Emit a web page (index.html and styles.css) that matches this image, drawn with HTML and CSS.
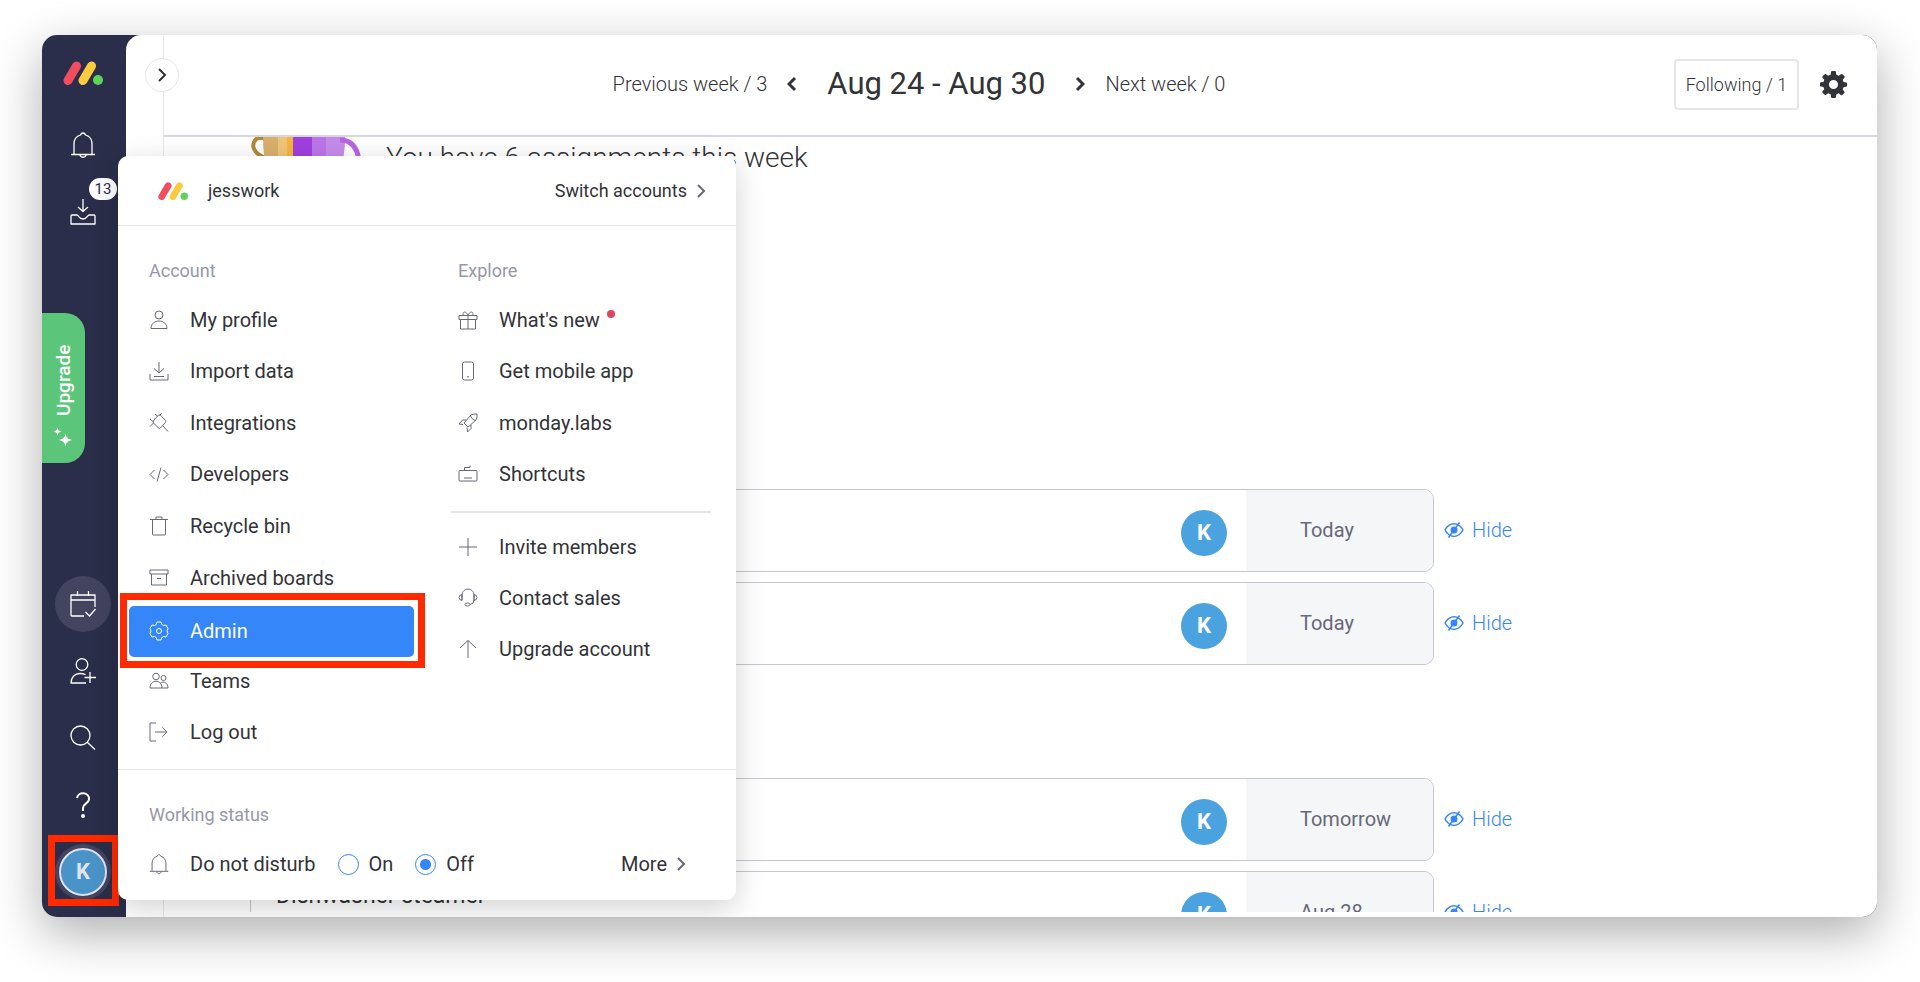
FILE: index.html
```
<!DOCTYPE html>
<html lang="en">
<head>
    <meta charset="UTF-8">
    <meta name="viewport" content="width=device-width, initial-scale=1.0">
    <title>My Week</title>
    <link rel="stylesheet" href="styles.css">
</head>
<body>
    <svg class="sprite" aria-hidden="true">
        <symbol id="logo" viewBox="0 0 40 24">
            <path d="M5 19.5 13.5 5" stroke="#f04e5e" stroke-width="9" stroke-linecap="round"/>
            <path d="M20 19.5 28.500 5" stroke="#fbcb3f" stroke-width="9" stroke-linecap="round"/>
            <circle cx="35" cy="19" r="5" fill="#5ed35c"/>
        </symbol>
        <symbol id="bell" viewBox="0 0 26 26">
            <path d="M1 22.500h24M4 22V12c0-5 3-8 6.500-9 .5-1.500 1.500-2 2.500-2s2 .5 2.500 2c3.500 1 6.500 4 6.500 9v10M10 23c.5 3 5.500 3 6 0"/>
        </symbol>
        <symbol id="eye" viewBox="0 0 20 16">
            <path d="M1 8c4.500-8.500 13.500-8.500 18 0-4.500 8.500-13.500 8.500-18 0zM15.500.5l-11 15"/>
            <circle cx="10" cy="8" r="3.500" fill="currentColor" stroke="none"/>
        </symbol>
        <symbol id="chevron" viewBox="0 0 10 16">
            <path d="m2 2 6 6-6 6"/>
        </symbol>
    </svg>

    <div class="window">
        <nav class="sidebar">
            <a href="#" class="logo" aria-label="Home"><svg><use href="#logo"/></svg></a>
            <button class="side-btn" aria-label="Notifications"><svg class="icon"><use href="#bell"/></svg></button>
            <button class="side-btn" aria-label="Inbox">
                <svg class="icon inbox" viewBox="0 0 26 26"><path d="M13 0v12.500M8 8l5 4.500L18 8M1 17q0-1 1-1h5c1.500 0 2 4 6 4s4.500-4 6-4h5q1 0 1 1v8H1z"/></svg>
                <span class="badge">13</span>
            </button>
            <button class="upgrade">
                <svg viewBox="0 0 20 20"><path d="M12.500 6.500c.7 4 2 5.300 6.500 6.500-4.500 1.200-5.800 2.500-6.500 6.500-.7-4-2-5.300-6.500-6.500 4.500-1.200 5.800-2.500 6.500-6.500zM4.500.5c.4 2.600 1.500 3.600 4 4-2.500.4-3.600 1.500-4 4-.4-2.500-1.500-3.600-4-4 2.500-.4 3.600-1.400 4-4z"/></svg>
                <span>Upgrade</span>
            </button>
            <div class="side-bottom">
                <button class="side-round active" aria-label="My week">
                    <svg class="icon" viewBox="0 0 26 26"><path d="M14 25H2q-1 0-1-1V4h24v12M1 9h24M7.500 0v5M18.500 0v5M15.500 21l4 4 6-7"/></svg>
                </button>
                <button class="side-round" aria-label="Invite">
                    <svg class="icon" viewBox="0 0 26 26"><circle cx="12" cy="6.500" r="5.800"/><path d="M16 25H1c0-6 4-9.500 9-9.500 2 0 4 .3 5.500 1.200M20 14v11M14.500 19.500H26"/></svg>
                </button>
                <button class="side-round" aria-label="Search">
                    <svg class="icon" viewBox="0 0 26 26"><circle cx="10.500" cy="10.500" r="9.500"/><path d="m17 17 8 7.500"/></svg>
                </button>
                <button class="side-round" aria-label="Help">
                    <svg class="icon help" viewBox="0 0 26 26"><path d="M7 6c1-7 13-6 12 1.500-.5 4.500-6 4-6 8.500v3"/><circle cx="13" cy="24" r="1"/></svg>
                </button>
                <button class="side-round me active" aria-label="Profile"><span class="avatar">K</span></button>
            </div>
        </nav>

        <div class="page">
            <div class="gutter">
                <button class="expand" aria-label="Expand"><svg class="chevron"><use href="#chevron"/></svg></button>
            </div>
            <main class="content">
                <header class="topbar">
                    <div class="weeks">
                        <a href="#">Previous week / 3</a>
                        <button class="week-arrow prev" aria-label="Previous"><svg class="chevron"><use href="#chevron"/></svg></button>
                        <h1>Aug 24 - Aug 30</h1>
                        <button class="week-arrow next" aria-label="Next"><svg class="chevron"><use href="#chevron"/></svg></button>
                        <a href="#">Next week / 0</a>
                    </div>
                    <button class="following">Following / 1</button>
                    <button class="settings" aria-label="Settings">
                        <svg viewBox="0 0 28 28"><path fill-rule="evenodd" d="M11.500 1q0-1 1-1h3q1 0 1 1l.5 3 2.500 1 2.300-1.700q.7-.6 1.400 0l2.200 2.200q.6.700 0 1.400L23.500 9.200l.9 2.300 2.600.3q1 0 1 1v2.600q0 1-1 1l-2.600.4-.9 2.300 1.700 2.200q.6.700 0 1.400l-2.300 2.200q-.7.600-1.400 0L19.500 23l-2.500 1-.5 3q0 1-1 1h-3q-1 0-1-1l-.5-3-2.500-1-2.200 1.700q-.7.600-1.400 0l-2.200-2.200q-.6-.7 0-1.400l1.800-2.200-1-2.300L1 16.200q-1 0-1-1v-2.600q0-1 1-1l2.500-.3 1-2.300-1.800-2.100q-.6-.7 0-1.400l2.200-2.200q.7-.6 1.400 0L8.500 5 11 4zM14 9.300a4.700 4.700 0 1 0 0 9.400 4.700 4.700 0 0 0 0-9.400z"/></svg>
                    </button>
                </header>

                <div class="scroll">
                    <div class="greeting">
                        <svg class="trophy" viewBox="0 0 112 60">
                            <path d="M14 1H7q-8 8 1 16l8 5" fill="none" stroke="#b0893a" stroke-width="4"/>
                            <path d="M13 0h30v50H30Q13 40 13 0z" fill="#d9b06c"/>
                            <path d="M28 0h10v50H28z" fill="#efc678"/>
                            <path d="M37 0h7v50h-7z" fill="#f6b53e"/>
                            <path d="M43 0h20v50H43z" fill="#a040e0"/>
                            <path d="M62 0h14v50H62z" fill="#bb76e8"/>
                            <path d="M76 0h19q0 40-19 50z" fill="#c68cec"/>
                            <path d="M90 3q16 0 19 20" fill="none" stroke="#b964e4" stroke-width="5"/>
                        </svg>
                        <h2>You have 6 assignments this week</h2>
                    </div>

                    <ul class="cards">
                        <li>
                            <div class="card"><div class="name"></div><span class="avatar">K</span><div class="date">Today</div></div>
                            <button class="hide"><svg class="eye"><use href="#eye"/></svg>Hide</button>
                        </li>
                        <li>
                            <div class="card"><div class="name"></div><span class="avatar">K</span><div class="date">Today</div></div>
                            <button class="hide"><svg class="eye"><use href="#eye"/></svg>Hide</button>
                        </li>
                    </ul>
                    <ul class="cards">
                        <li>
                            <div class="card"><div class="name"></div><span class="avatar">K</span><div class="date">Tomorrow</div></div>
                            <button class="hide"><svg class="eye"><use href="#eye"/></svg>Hide</button>
                        </li>
                        <li>
                            <div class="card"><div class="name">Dishwasher steamer</div><span class="avatar">K</span><div class="date">Aug 28</div></div>
                            <button class="hide"><svg class="eye"><use href="#eye"/></svg>Hide</button>
                        </li>
                    </ul>
                </div>
            </main>
        </div>

        <div class="marker marker-avatar"></div>

        <div class="menu">
            <div class="menu-top">
                <svg class="menu-logo"><use href="#logo"/></svg>
                <span>jesswork</span>
                <a href="#" class="more">Switch accounts <svg class="chevron"><use href="#chevron"/></svg></a>
            </div>

            <div class="menu-cols">
                <section>
                    <h3>Account</h3>
                    <ul class="items account">
                        <li><a href="#"><svg class="icon" viewBox="0 0 20 20"><circle cx="10" cy="5" r="4"/><path d="M2 18.500c0-10 16-10 16 0z"/></svg>My profile</a></li>
                        <li><a href="#"><svg class="icon" viewBox="0 0 20 20"><path d="M1 13v6h18v-6M5 15.500h10M10 1v11M5 7.500l5 4.500 5-4.500"/></svg>Import data</a></li>
                        <li><a href="#"><svg class="icon" viewBox="0 0 20 20"><path d="m7 4.500 2.500-2.200q1-.8 2 0l5 5q1 1 0 2L11.500 15q-1 1-2 0L4.500 10q-1-1 0-2zM1 6l3 2.500M1 13.500l3.500-3.500M6 1l3 2.500M10.500 2.500l2-2M14 13l5 5.500"/></svg>Integrations</a></li>
                        <li><a href="#"><svg class="icon" viewBox="0 0 20 20"><path d="M5.500 6 1 10.500 5.500 15M14.500 6l4.500 4.500-4.500 4.500M12 3.500 8 17.500"/></svg>Developers</a></li>
                        <li><a href="#"><svg class="icon" viewBox="0 0 20 20"><path d="M1 3.500h18M7 3V1h6v2M3.500 4v14q0 1 1 1h11q1 0 1-1V4"/></svg>Recycle bin</a></li>
                        <li><a href="#"><svg class="icon" viewBox="0 0 20 20"><path d="M1 2h18v4H1zM2.500 6v11h15V6M8 10.500h4"/></svg>Archived boards</a></li>
                        <li class="selected"><a href="#"><svg class="icon" viewBox="0 0 20 20"><path d="M8 1h4l.8 2.500 1.700 1 2.500-.5 2 3.500-1 2.500 1 2.500-2 3.500-2.500-.5-1.700 1L12 19H8l-.8-2.500-1.700-1L3 16l-2-3.500L2 10 1 7.500 3 4l2.500.5 1.700-1z"/><circle cx="10" cy="10" r="2.500"/></svg>Admin</a></li>
                        <li><a href="#"><svg class="icon" viewBox="0 0 20 20"><circle cx="7" cy="5.500" r="3.300"/><circle cx="14.500" cy="7" r="2.500"/><path d="M1 17c0-9 12-9 12 0zM11.500 12c3-2.500 7.500 0 7.500 5h-6"/></svg>Teams</a></li>
                        <li><a href="#"><svg class="icon" viewBox="0 0 20 20"><path d="M7 1H1v18h6M6 10h12M13.500 5.500 18 10l-4.500 4.500"/></svg>Log out</a></li>
                    </ul>
                </section>
                <section>
                    <h3>Explore</h3>
                    <ul class="items">
                        <li><a href="#"><svg class="icon" viewBox="0 0 20 20"><path d="M1 5.500h18v4H1zM2.500 9.500V19h15V9.500M10 5.500V19M10 5.500C8 0 3.500 2 5.500 5.500M10 5.500c2-5.500 6.500-3.500 4.500 0"/></svg>What's new<span class="dot"></span></a></li>
                        <li><a href="#"><svg class="icon" viewBox="0 0 20 20"><rect x="4.500" y="1" width="11" height="18" rx="2"/><path d="M9.300 15.800h1.400" stroke-width="1.500"/></svg>Get mobile app</a></li>
                        <li><a href="#"><svg class="icon" viewBox="0 0 20 20"><path d="m6 10 7-8q3-1.500 6-1 .5 3-1 6l-8 7zM12.500 3q1 3 4.500 4.500M8 7H4.500L1 11l4 .5M13 12v3.500L9.500 19 9 14.500"/></svg>monday.labs</a></li>
                        <li><a href="#"><svg class="icon" viewBox="0 0 20 20"><rect x="1" y="6.500" width="18" height="10.500" rx="1"/><path d="M6 14h8M6.500 6.500V3.500h5.500V1.500"/></svg>Shortcuts</a></li>
                    </ul>
                    <hr>
                    <ul class="items">
                        <li><a href="#"><svg class="icon" viewBox="0 0 20 20"><path d="M10 1v18M1 10h18"/></svg>Invite members</a></li>
                        <li><a href="#"><svg class="icon" viewBox="0 0 20 20"><path d="M4 12V7.500C4-1 16-1 16 7.500V12M4 6.500q-3 .5-3 3t3 3zM16 6.500q3 .5 3 3t-3 3zM16 12q0 4-4 4.500"/><ellipse cx="9.500" cy="16.500" rx="2.500" ry="1.500"/></svg>Contact sales</a></li>
                        <li><a href="#"><svg class="icon" viewBox="0 0 20 20"><path d="M10 19V1.500M2 9l8-7.500L18 9"/></svg>Upgrade account</a></li>
                    </ul>
                </section>
            </div>

            <div class="status">
                <h3>Working status</h3>
                <div class="dnd">
                    <svg class="icon"><use href="#bell"/></svg>
                    <span>Do not disturb</span>
                    <label><input type="radio" name="dnd">On</label>
                    <label><input type="radio" name="dnd" checked>Off</label>
                    <a href="#" class="more">More <svg class="chevron"><use href="#chevron"/></svg></a>
                </div>
            </div>
        </div>
    </div>
</body>
</html>
```
FILE: styles.css
```
* {
    box-sizing: border-box;
}
body {
    margin: 0;
    padding: 35px 43px 65px 42px;
    height: 100vh;
    overflow: hidden;
    font-family: Roboto, "Liberation Sans", sans-serif;
    font-size: 20px;
    color: #323338;
    background: #fff;
}
h1, h2, h3, ul {
    margin: 0;
    padding: 0;
    font-weight: 400;
}
ul {
    list-style: none;
}
a {
    color: inherit;
    text-decoration: none;
}
button {
    padding: 0;
    border: none;
    background: none;
    font: inherit;
    color: inherit;
    cursor: pointer;
}
svg {
    display: block;
    flex-shrink: 0;
}
.sprite {
    position: absolute;
    width: 0;
    height: 0;
}
.icon {
    width: 20px;
    height: 20px;
    fill: none;
    stroke: #676879;
    stroke-width: 1;
    stroke-linejoin: round;
}
.chevron {
    width: 10px;
    height: 16px;
    fill: none;
    stroke: currentColor;
    stroke-width: 2;
}
.window {
    position: relative;
    display: flex;
    height: 100%;
    border-radius: 15px;
    overflow: hidden;
    background: #2b2e4a;
    box-shadow: 0 16px 50px rgba(0, 0, 0, 0.32);
}

/* sidebar */
.sidebar {
    display: flex;
    flex-direction: column;
    align-items: center;
    width: 84px;
    padding: 26px 2px 17px 0;
    flex-shrink: 0;
    color: #fff;
}
.logo svg {
    width: 40px;
    height: 24px;
}
.side-btn {
    position: relative;
    margin-top: 47px;
}
.side-btn + .side-btn {
    margin-top: 41px;
}
.sidebar .icon {
    width: 26px;
    height: 26px;
    stroke: #fff;
    stroke-width: 1.3;
}
.sidebar .help {
    stroke-width: 2;
}
.badge {
    position: absolute;
    left: 19px;
    top: -21px;
    width: 28px;
    border-radius: 11px;
    background: #fff;
    color: #2b2e4a;
    font-size: 15px;
    line-height: 22px;
    text-align: center;
}
.upgrade {
    display: flex;
    align-items: center;
    gap: 11px;
    align-self: flex-start;
    width: 43px;
    height: 150px;
    margin-top: 88px;
    padding-top: 16px;
    border-radius: 20px 0 0 20px;
    background: #5bc67a;
    color: #fff;
    font-size: 19px;
    font-weight: 500;
    writing-mode: vertical-rl;
    transform: rotate(180deg);
}
.upgrade svg {
    width: 20px;
    height: 20px;
    fill: #fff;
    transform: rotate(180deg);
}
.side-bottom {
    display: flex;
    flex-direction: column;
    gap: 11px;
    margin-top: auto;
}
.side-round {
    display: flex;
    align-items: center;
    justify-content: center;
    width: 56px;
    height: 56px;
    border-radius: 50%;
}
.side-round.active {
    background: #424460;
}
.avatar {
    width: 46px;
    height: 46px;
    border-radius: 50%;
    background: #4aa3df;
    color: #fff;
    font-size: 22px;
    font-weight: 700;
    line-height: 46px;
    text-align: center;
    flex-shrink: 0;
}
.me .avatar {
    width: 48px;
    height: 48px;
    border: 2px solid #dfe1ea;
    background: #4a93c9;
    color: #dfe3ea;
    line-height: 44px;
}

/* page */
.page {
    display: flex;
    flex: 1;
    min-width: 0;
    border-top-left-radius: 15px;
    background: #fff;
}
.gutter {
    position: relative;
    width: 38px;
    border-right: 1px solid #e6e6ee;
}
.expand {
    position: absolute;
    top: 23px;
    right: -16px;
    display: flex;
    align-items: center;
    justify-content: center;
    width: 34px;
    height: 34px;
    border: 1px solid #e6e6ee;
    border-radius: 50%;
    background: #fff;
}
.content {
    display: flex;
    flex-direction: column;
    flex: 1;
    min-width: 0;
}
.topbar {
    display: flex;
    align-items: center;
    height: 102px;
    padding: 0 30px 2px 0;
    border-bottom: 2px solid #d8d9df;
    flex-shrink: 0;
}
.weeks {
    display: flex;
    align-items: center;
    justify-content: center;
    flex: 1;
    font-weight: 300;
}
.weeks h1 {
    font-size: 31px;
    line-height: 40px;
}
.week-arrow.prev {
    margin: 0 30px 0 20px;
    transform: rotate(180deg);
}
.week-arrow.next {
    margin: 0 20px 0 30px;
}
.week-arrow .chevron {
    stroke-width: 3;
    height: 16px;
}
.following {
    width: 125px;
    height: 51px;
    border: 2px solid #e6e6e8;
    border-radius: 4px;
    font-size: 18px;
    font-weight: 300;
}
.settings {
    margin-left: 21px;
}
.settings svg {
    width: 27px;
    height: 27px;
    fill: #323338;
}
.scroll {
    flex: 1;
    min-height: 0;
    margin-bottom: 5px;
    padding-left: 86px;
    overflow: hidden;
}
.greeting {
    display: flex;
    align-items: flex-start;
    gap: 24px;
    height: 239px;
}
.greeting h2 {
    margin-top: 5px;
    font-size: 28px;
    font-weight: 300;
    line-height: 32px;
}
.trophy {
    width: 112px;
    height: 60px;
}
.cards {
    display: flex;
    flex-direction: column;
    gap: 10px;
    padding-top: 113px;
}
.cards li {
    display: flex;
    align-items: center;
    gap: 10px;
}
.card {
    display: flex;
    flex: 1;
    align-items: center;
    max-width: 1184px;
    height: 83px;
    border: 1px solid #c5c7d0;
    border-radius: 10px;
    overflow: hidden;
    background: #fff;
}
.card .name {
    flex: 1;
    padding: 0 0 34px 25px;
    font-size: 23px;
    line-height: 28px;
}
.card .avatar {
    margin-top: 4px;
}
.date {
    display: flex;
    align-items: center;
    width: 187px;
    height: 100%;
    margin-left: 19px;
    padding: 0 0 2px 54px;
    background: #f5f6f8;
    color: #676879;
}
.hide {
    display: flex;
    align-items: center;
    gap: 8px;
    padding-bottom: 2px;
    color: #3586f8;
    font-weight: 300;
}
.eye {
    width: 20px;
    height: 16px;
    fill: none;
    stroke: currentColor;
    stroke-width: 1.5;
}

/* account menu, opens over the page */
.menu {
    position: absolute;
    left: 76px;
    top: 121px;
    width: 618px;
    border-radius: 10px;
    background: #fff;
    box-shadow: 0 8px 30px rgba(0, 0, 0, 0.18);
}
.menu-top {
    display: flex;
    align-items: center;
    gap: 20px;
    height: 70px;
    padding: 0 30px 0 40px;
    border-bottom: 1px solid #e6e8ef;
    font-size: 18px;
}
.menu-logo {
    width: 30px;
    height: 18px;
}
.more {
    display: flex;
    align-items: center;
    gap: 9px;
    margin-left: auto;
}
.more .chevron {
    color: #676879;
}
.menu h3 {
    padding-left: 31px;
    color: #9698a6;
    font-size: 18px;
    line-height: 24px;
}
.menu-cols {
    display: grid;
    grid-template-columns: 1fr 1fr;
    height: 543px;
    padding-top: 33px;
}
.items {
    display: grid;
    grid-auto-rows: 1fr;
    height: 206px;
}
.items.account {
    height: 464px;
}
.menu h3 + .items {
    margin-top: 11px;
}
.items a {
    display: flex;
    align-items: center;
    gap: 21px;
    height: 100%;
    padding-left: 31px;
}
.items .dot {
    width: 8px;
    height: 8px;
    margin: -12px 0 0 -14px;
    border-radius: 50%;
    background: #d9485f;
}

/* selected item with its red highlight frame */
.items .selected {
    position: relative;
}
.items .selected a {
    position: absolute;
    z-index: 1;
    left: 2px;
    top: -10px;
    width: 305px;
    height: 75px;
    padding-left: 22px;
    border: 7px solid #ff2a00;
    background: #fff;
    color: #fff;
}
.items .selected a::before {
    content: "";
    position: absolute;
    z-index: -1;
    left: 2px;
    top: 6px;
    width: 285px;
    height: 51px;
    border-radius: 5px;
    background: #3586f8;
}
.items .selected .icon {
    stroke: #fff;
}
hr {
    width: 260px;
    height: 2px;
    margin: 11px 0 8px 24px;
    border: none;
    background: #e4e5e9;
}
hr + .items {
    height: 154px;
}
.status {
    height: 131px;
    padding-top: 33px;
    border-top: 1px solid #e6e8ef;
}
.dnd {
    display: flex;
    align-items: center;
    margin-top: 25px;
    padding: 0 50px 0 31px;
    line-height: 24px;
}
.dnd .icon {
    margin-right: 21px;
    stroke-width: 1.3;
}
.dnd label {
    display: flex;
    align-items: center;
    gap: 10px;
    margin-left: 22px;
}
.dnd input {
    appearance: none;
    width: 21px;
    height: 21px;
    margin: 0;
    border: 1px solid #3586f8;
    border-radius: 50%;
}
.dnd input:checked {
    background: radial-gradient(circle, #3586f8 5px, transparent 6px);
}

/* highlight frame round the profile button */
.marker {
    position: absolute;
    border: 7px solid #ff2a00;
}
.marker-avatar {
    left: 6px;
    bottom: 11px;
    width: 71px;
    height: 71px;
}
```
